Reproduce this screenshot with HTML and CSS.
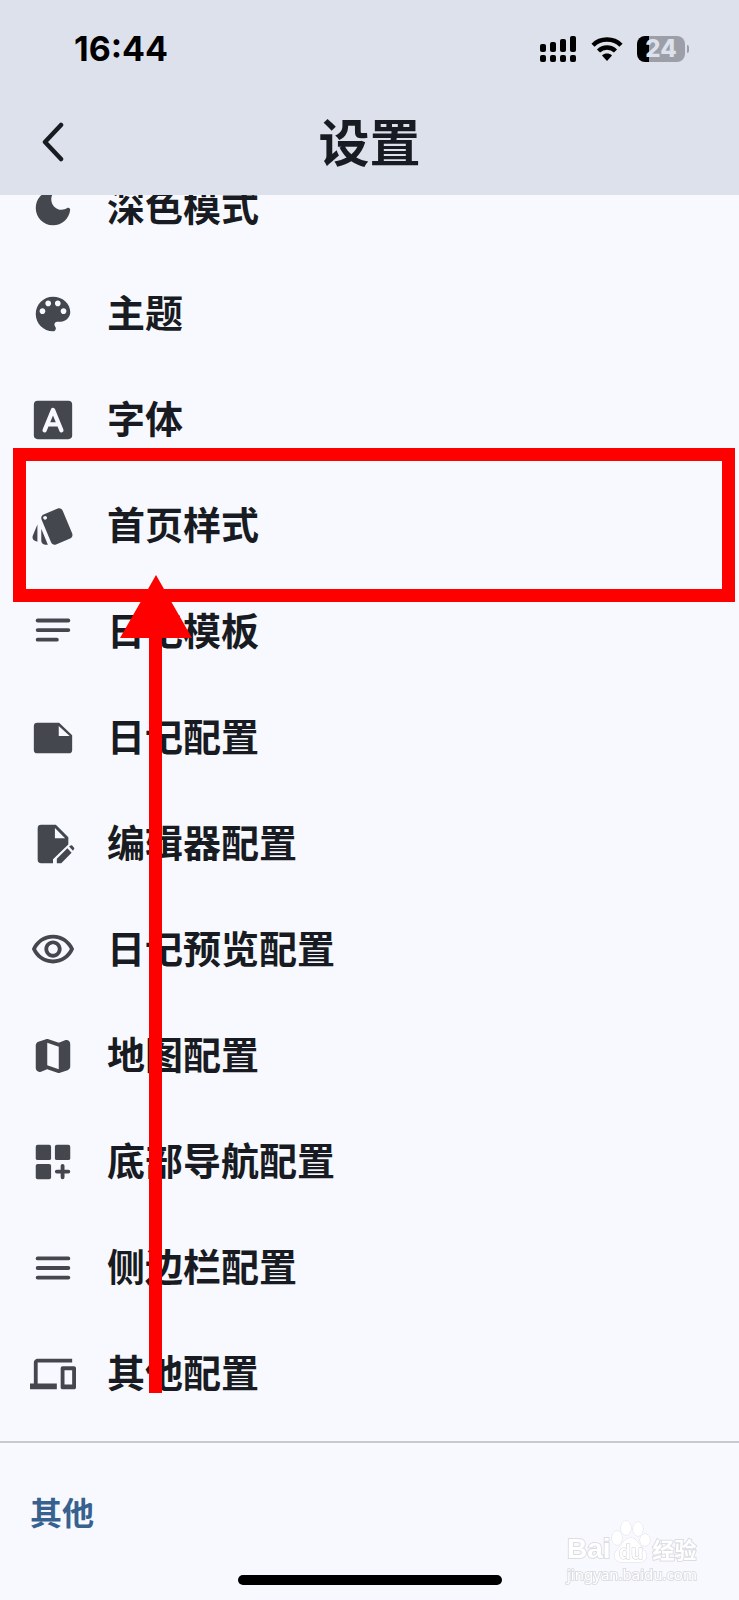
FILE: index.html
```html
<!DOCTYPE html>
<html lang="zh-CN">
<head>
  <meta charset="UTF-8">
  <meta name="viewport" content="width=device-width, initial-scale=1">
  <title>设置</title>
  <link rel="stylesheet" href="styles.css">
</head>
<body>

  <header class="header">
    <div class="status">
      <span class="time">16:44</span>
      <div class="status-icons">
        <svg width="37" height="26" viewBox="0 0 37 26">
          <rect x="0" y="8" width="6" height="8" rx="2"/>
          <rect x="10" y="6" width="6" height="10" rx="2"/>
          <rect x="20" y="3" width="6" height="13" rx="2"/>
          <rect x="30" y="0" width="6" height="16" rx="2"/>
          <rect x="0" y="19" width="6" height="7" rx="2"/>
          <rect x="10" y="19" width="6" height="7" rx="2"/>
          <rect x="20" y="19" width="6" height="7" rx="2"/>
          <rect x="30" y="19" width="6" height="7" rx="2"/>
        </svg>
        <svg width="32" height="24" viewBox="0 0 32 24">
          <path d="M2 8.2C9.500 .6 22.500 .6 30 8.200" fill="none" stroke="#000" stroke-width="4.400"/>
          <path d="M7.500 14C12.300 9.300 19.700 9.300 24.500 14" fill="none" stroke="#000" stroke-width="4.400"/>
          <path d="M11 18.400C13.800 15.900 18.200 15.900 21 18.400L16 24Z"/>
        </svg>
        <div class="battery"><span>24</span></div>
      </div>
    </div>
    <div class="navbar">
      <button type="button" class="back" aria-label="返回">
        <svg width="24" height="40" viewBox="0 0 24 40"><path d="M21 3L5 20L21 37" fill="none" stroke="#181c22" stroke-width="4.500" stroke-linecap="round" stroke-linejoin="round"/></svg>
      </button>
      <h1>设置</h1>
    </div>
  </header>

  <main>
    <nav class="list">
      <a class="item" href="#">
        <svg class="icon" viewBox="0 0 24 24"><path d="M11.010 3.050C6.510 3.540 3 7.360 3 12c0 4.970 4.030 9 9 9 4.630 0 8.450-3.500 8.950-8 .09-.79-.78-1.420-1.540-.95-.84.54-1.840.85-2.910.85-2.980 0-5.400-2.420-5.400-5.400 0-1.060.31-2.060.84-2.890.45-.67-.04-1.630-.93-1.560z"/></svg>
        <span>深色模式</span>
      </a>
      <a class="item" href="#">
        <svg class="icon" viewBox="0 0 24 24"><path d="M12 3c-4.970 0-9 4.030-9 9s4.030 9 9 9c.83 0 1.500-.67 1.500-1.500 0-.39-.15-.74-.39-1.010-.23-.26-.38-.61-.38-.99 0-.83.67-1.500 1.500-1.500H16c2.760 0 5-2.240 5-5 0-4.420-4.030-8-9-8zm-5.500 9c-.83 0-1.500-.67-1.500-1.500S5.670 9 6.500 9 8 9.670 8 10.500 7.330 12 6.500 12zm3-4C8.670 8 8 7.330 8 6.500S8.670 5 9.500 5s1.500.67 1.500 1.500S10.330 8 9.500 8zm5 0c-.83 0-1.500-.67-1.500-1.500S13.670 5 14.500 5s1.500.67 1.500 1.500S15.330 8 14.500 8zm3 4c-.83 0-1.500-.67-1.500-1.500S16.670 9 17.500 9s1.500.67 1.500 1.500-.67 1.500-1.500 1.500z"/></svg>
        <span>主题</span>
      </a>
      <a class="item" href="#">
        <svg class="icon" viewBox="0 0 24 24"><rect x="2" y="2" width="20" height="20" rx="2"/><path d="M7.600 17.400L12 6.700L16.400 17.400M8.900 14.300H15.100" fill="none" stroke="#f8f9ff" stroke-width="2.200" stroke-linecap="round" stroke-linejoin="round"/></svg>
        <span>字体</span>
      </a>
      <a class="item marked" href="#">
        <svg class="icon" viewBox="0 0 24 24"><path d="M2.530 19.650l1.340.56v-9.030l-2.430 5.860c-.41 1.020.08 2.190 1.090 2.610zm19.500-3.700L17.070 3.980c-.31-.75-1.040-1.210-1.810-1.230-.26 0-.53.04-.79.15L7.100 5.950c-.75.31-1.210 1.030-1.230 1.800-.01.27.04.54.15.8l4.960 11.970c.31.76 1.050 1.220 1.830 1.230.26 0 .52-.05.77-.15l7.360-3.050c1.020-.42 1.510-1.590 1.090-2.600zM7.880 8.750c-.55 0-1-.45-1-1s.45-1 1-1 1 .45 1 1-.45 1-1 1zm-2 11c0 1.100.9 2 2 2h1.450l-3.450-8.340v6.340z"/></svg>
        <span>首页样式</span>
        <svg class="arrow" width="72" height="818" viewBox="0 0 72 818"><path d="M36 0L72 63H42V818H29V63H0Z"/></svg>
      </a>
      <a class="item" href="#">
        <svg class="icon" viewBox="0 0 24 24"><rect x="3" y="5" width="18" height="2" rx="1"/><rect x="3" y="10" width="18" height="2" rx="1"/><rect x="3" y="15" width="12" height="2" rx="1"/></svg>
        <span>日记模板</span>
      </a>
      <a class="item" href="#">
        <svg class="icon" viewBox="0 0 24 24"><path d="M4 4H15.200L22 10.500V18.200Q22 20 20.200 20H3.800Q2 20 2 18.200V5.800Q2 4 3.800 4ZM15 5.700V11H20.700Z"/></svg>
        <span>日记配置</span>
      </a>
      <a class="item" href="#">
        <svg class="icon" viewBox="0 0 24 24"><path d="M5.800 2H13.500L20 8.500V12.200L12 20V22H5.800Q4 22 4 20.200V3.800Q4 2 5.800 2ZM13 3.700V9H18.300Z"/><path d="M14 22V19.700L19.500 14.200L21.700 16.500L16.300 22ZM20.400 13.300L21.200 12.800Q21.600 12.500 22 12.800L23 13.900Q23.300 14.200 23 14.600L22.400 15.500Z"/></svg>
        <span>编辑器配置</span>
      </a>
      <a class="item" href="#">
        <svg class="icon" viewBox="0 0 24 24"><path d="M12 6c3.790 0 7.170 2.130 8.820 5.500C19.170 14.870 15.790 17 12 17s-7.170-2.130-8.820-5.500C4.830 8.130 8.210 6 12 6m0-2C7 4 2.730 7.110 1 11.500 2.730 15.890 7 19 12 19s9.270-3.110 11-7.500C21.270 7.110 17 4 12 4zm0 5c1.380 0 2.500 1.120 2.500 2.500S13.380 14 12 14s-2.500-1.120-2.500-2.500S10.620 9 12 9m0-2c-2.480 0-4.500 2.020-4.500 4.500S9.520 16 12 16s4.500-2.020 4.500-4.500S14.480 7 12 7z"/></svg>
        <span>日记预览配置</span>
      </a>
      <a class="item" href="#">
        <svg class="icon" viewBox="0 0 24 24"><path d="M14.650 4.980l-5-1.750c-.42-.15-.88-.15-1.300-.01L4.360 4.560C3.550 4.840 3 5.600 3 6.460v11.850c0 1.410 1.410 2.370 2.720 1.860l2.930-1.140c.22-.09.47-.09.69-.01l5 1.750c.42.15.88.15 1.300.01l3.990-1.340c.81-.27 1.360-1.040 1.360-1.900V5.690c0-1.410-1.410-2.370-2.720-1.860l-2.930 1.140c-.22.08-.46.09-.69.01zM15 18.890l-6-2.110V5.110l6 2.110v11.670z"/></svg>
        <span>地图配置</span>
      </a>
      <a class="item" href="#">
        <svg class="icon" viewBox="0 0 24 24"><rect x="3" y="3" width="8" height="8" rx="1"/><rect x="13" y="3" width="8" height="8" rx="1"/><rect x="3" y="13" width="8" height="8" rx="1"/><path d="M17 14V20M14 17H20" fill="none" stroke="#44474e" stroke-width="2" stroke-linecap="round"/></svg>
        <span>底部导航配置</span>
      </a>
      <a class="item" href="#">
        <svg class="icon" viewBox="0 0 24 24"><rect x="3" y="6" width="18" height="2" rx="1"/><rect x="3" y="11" width="18" height="2" rx="1"/><rect x="3" y="16" width="18" height="2" rx="1"/></svg>
        <span>侧边栏配置</span>
      </a>
      <a class="item" href="#">
        <svg class="icon" viewBox="0 0 24 24"><path d="M4 6h18V4H4c-1.100 0-2 .9-2 2v11H0v3h14v-3H4V6zm19 2h-6c-.55 0-1 .45-1 1v10c0 .55.45 1 1 1h6c.55 0 1-.45 1-1V9c0-.55-.45-1-1-1zm-1 9.500h-4v-7.500h4v7.500z"/></svg>
        <span>其他配置</span>
      </a>
    </nav>

    <section class="group">
      <h2>其他</h2>
    </section>
  </main>

  <div class="watermark">
    <div class="brand">
      <span>Bai</span>
      <svg width="40" height="44" viewBox="0 0 40 44">
        <ellipse cx="6" cy="18" rx="5" ry="7"/>
        <ellipse cx="15" cy="8" rx="5" ry="7"/>
        <ellipse cx="27" cy="9" rx="5" ry="7"/>
        <ellipse cx="34" cy="20" rx="5" ry="6"/>
        <path d="M20 18C26 18 28 25 33 30C38 36 35 42 29 42H11C4 42 1 36 6 30C11 25 13 18 20 18Z"/>
        <text x="20" y="39" text-anchor="middle">du</text>
      </svg>
      <span class="brand-cn">经验</span>
    </div>
    <div class="site">jingyan.baidu.com</div>
  </div>

  <div class="home-bar"></div>

</body>
</html>
```
FILE: styles.css
```css
* { box-sizing: border-box; }
body { margin: 0; min-height: 100vh; background: #f8f9ff; color: #181c22; font-family: "Noto Sans CJK SC", sans-serif; }
h1, h2 { margin: 0; }

.header { position: sticky; top: 0; z-index: 2; height: 195px; background: #dde1ec; }
.status { display: flex; justify-content: space-between; align-items: center; height: 98px; padding: 0 54px 0 74px; color: #000; }
.time { font: 700 34px/40px Inter, sans-serif; }
.status-icons { display: flex; align-items: center; gap: 14px; }
.battery { position: relative; width: 48px; height: 26px; border-radius: 8px; background: linear-gradient(90deg, #000 12px, #9c9fa8 12px); color: #dde1ec; text-align: center; font: 800 24px/26px Inter, sans-serif; }
.battery::after { content: ""; position: absolute; right: -4px; top: 9px; width: 2px; height: 8px; border-radius: 0 2px 2px 0; background: #9c9fa8; }

.navbar { display: grid; grid-template-columns: 100px 1fr 100px; align-items: center; height: 88px; }
.back { display: flex; padding: 0; margin-left: 40px; border: none; background: none; cursor: pointer; }
.navbar h1 { padding-bottom: 4px; text-align: center; font-size: 51px; line-height: 60px; font-weight: 700; }

.list { margin-top: -40px; padding-bottom: 14px; border-bottom: 2px solid #c8cad2; }
.item { position: relative; display: flex; align-items: center; gap: 31px; height: 106px; padding: 0 30px; color: #181c22; font-size: 38px; font-weight: 700; text-decoration: none; }
.item span { padding-bottom: 8px; }
.icon { flex: none; width: 46px; height: 46px; fill: #44474e; overflow: visible; }

/* highlighted row and the pointer to it */
.marked { z-index: 1; }
.marked::after { content: ""; position: absolute; top: -25px; right: 4px; bottom: -23px; left: 13px; border: 13px solid #f00; }
.arrow { position: absolute; z-index: 1; top: 102px; left: 120px; fill: #f00; }

.group { padding: 44px 30px; }
.group h2 { color: #37618e; font-size: 32px; line-height: 48px; font-weight: 700; }

.watermark { position: fixed; right: 40px; bottom: 16px; width: 132px; color: #fff; white-space: nowrap; -webkit-text-stroke: 2px #dddee4; paint-order: stroke fill; }
.brand { display: flex; align-items: flex-end; height: 46px; font: 700 28px/30px "Liberation Sans", sans-serif; }
.brand svg { flex: none; fill: #fff; stroke: #dddee4; }
.brand svg text { font: 700 20px "Liberation Sans", sans-serif; stroke: #cfd0d6; }
.brand-cn { margin-left: 2px; font: 700 22px/32px "Noto Sans CJK SC", sans-serif; }
.site { font: 15px/20px "Noto Sans", sans-serif; }

.home-bar { position: fixed; bottom: 15px; left: 50%; width: 264px; height: 10px; margin-left: -132px; border-radius: 5px; background: #000; }
```
